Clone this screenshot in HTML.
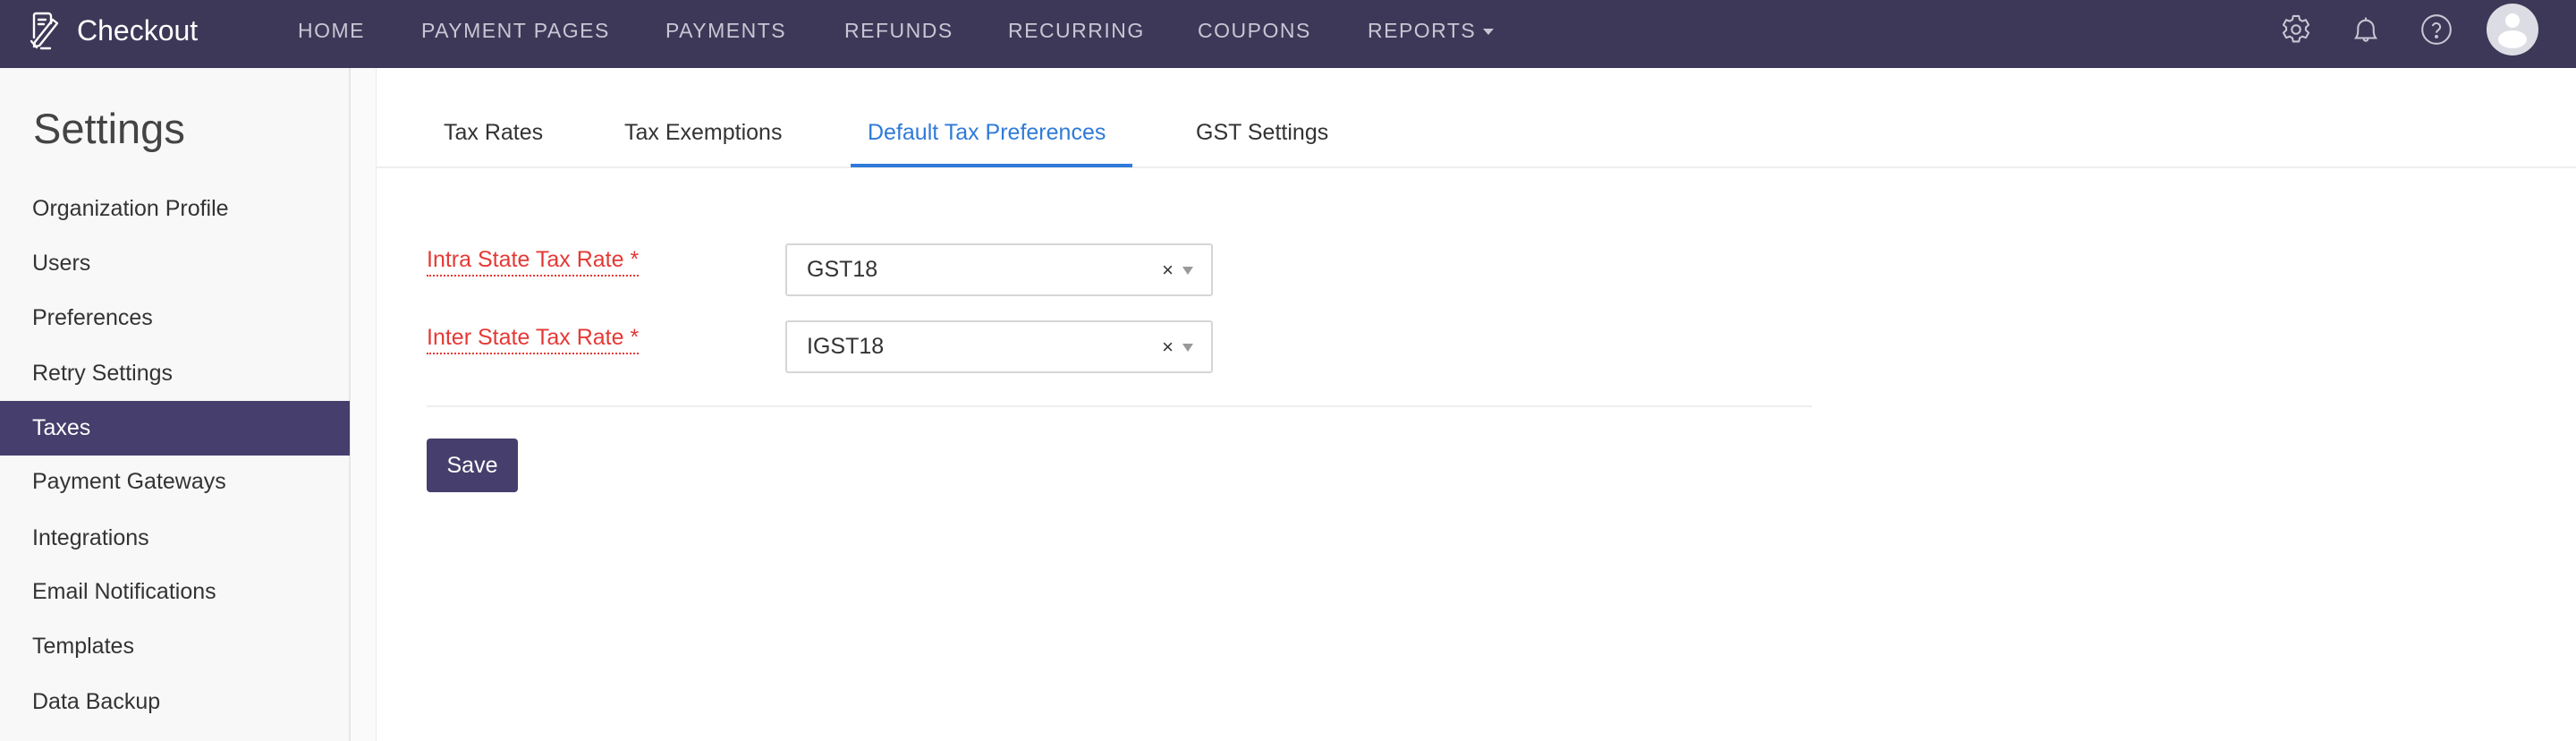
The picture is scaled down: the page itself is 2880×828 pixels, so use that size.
<!DOCTYPE html>
<html><head><meta charset="utf-8"><style>
*{margin:0;padding:0;box-sizing:border-box}
body{width:2880px;height:828px;overflow:hidden;font-family:"Liberation Sans",sans-serif;background:#fff;position:relative}
.nav{position:absolute;left:0;top:0;width:2880px;height:76px;background:#3d3857}
.nav .t{position:absolute;top:0;line-height:68px;color:#c8c6d4;font-size:23px;letter-spacing:1.5px}
.logo{position:absolute;left:86px;top:0;line-height:68px;color:#fff;font-size:32px}
.side{position:absolute;left:0;top:76px;width:392px;height:752px;background:#f8f8f8;border-right:2px solid #e6e6e6}
.gap{position:absolute;left:392px;top:76px;width:29px;height:752px;background:#fafafa;border-right:1px solid #ececec}
.side h1{position:absolute;left:37px;top:40px;font-size:47px;font-weight:normal;color:#444}
.si{position:absolute;left:0;width:391px;height:61px;line-height:61px;padding-left:36px;font-size:25px;color:#333}
.si.a{background:#463e6c;color:#fff}
.tab{position:absolute;top:134px;font-size:25px;color:#333}
.lbl{position:absolute;left:477px;font-size:25px;color:#e53935;border-bottom:2px dotted #e53935;padding-bottom:2px}
.sel{position:absolute;left:878px;width:478px;height:59px;border:2px solid #d6d6d6;border-radius:3px;font-size:25px;color:#333;line-height:55px;padding-left:22px}
.sel .x{position:absolute;right:42px;top:0;font-size:22px}
.sel .c{position:absolute;right:20px;top:24px;border-left:6px solid transparent;border-right:6px solid transparent;border-top:9px solid #999}
</style></head><body>
<div class="nav">
<svg style="position:absolute;left:30px;top:12px" width="42" height="46" viewBox="0 0 42 46" fill="none" stroke="#fff" stroke-width="2.4" stroke-linejoin="round" stroke-linecap="round"><path d="M8 30V5a2 2 0 0 1 2-2h14a3 3 0 0 1 3 3v8"/><path d="M13 10h8M13 15h6"/><path d="M8 40l6-1 20-25-5-4-20 25z"/><path d="M5 34l6 7"/><path d="M16 42h10"/></svg>
<div class="logo">Checkout</div>
<div class="t" style="left:333px">HOME</div>
<div class="t" style="left:471px">PAYMENT PAGES</div>
<div class="t" style="left:744px">PAYMENTS</div>
<div class="t" style="left:944px">REFUNDS</div>
<div class="t" style="left:1127px">RECURRING</div>
<div class="t" style="left:1339px">COUPONS</div>
<div class="t" style="left:1529px">REPORTS <span style="display:inline-block;border-left:6px solid transparent;border-right:6px solid transparent;border-top:7px solid #c8c6d4;vertical-align:middle"></span></div>
<svg style="position:absolute;left:2548px;top:14px" width="38" height="38" viewBox="0 0 24 24" fill="none" stroke="#c8c6d4" stroke-width="1.3" stroke-linejoin="round"><circle cx="12" cy="12" r="3"/><path d="M10 2.5h4l.6 2.6 1.8 1 2.5-.9 2 3.5-2 1.8v2l2 1.8-2 3.5-2.5-.9-1.8 1-.6 2.6h-4l-.6-2.6-1.8-1-2.5.9-2-3.5 2-1.8v-2l-2-1.8 2-3.5 2.5.9 1.800-1z"/></svg>
<svg style="position:absolute;left:2626px;top:14px" width="38" height="38" viewBox="0 0 24 24" fill="none" stroke="#c8c6d4" stroke-width="1.3"><path d="M5 18c1.5-2 1.5-4 1.5-7a5.5 5.5 0 0 1 11 0c0 3 0 5 1.5 7z"/><path d="M12 3.5V5"/><path d="M10.5 18.5a1.5 1.5 0 0 0 3 0"/></svg>
<svg style="position:absolute;left:2705px;top:14px" width="38" height="38" viewBox="0 0 24 24" fill="none" stroke="#c8c6d4" stroke-width="1.3"><circle cx="12" cy="12" r="10"/><path d="M9.3 9.5a2.7 2.7 0 0 1 5.3.8c0 1.8-2.6 2.3-2.6 4"/><circle cx="12" cy="17" r=".6" fill="#c8c6d4"/></svg>
<div style="position:absolute;left:2780px;top:4px;width:58px;height:58px;border-radius:50%;background:#dcdde4;overflow:hidden"><div style="position:absolute;left:21px;top:11px;width:16px;height:16px;border-radius:50%;background:#fff"></div><div style="position:absolute;left:13px;top:30px;width:32px;height:20px;border-radius:50%;background:#fff"></div></div>
</div>
<div class="side"><h1>Settings</h1></div>
<div class="gap"></div>
<div class="si" style="top:203px">Organization Profile</div>
<div class="si" style="top:264px">Users</div>
<div class="si" style="top:325px">Preferences</div>
<div class="si" style="top:387px">Retry Settings</div>
<div class="si a" style="top:448px">Taxes</div>
<div class="si" style="top:508px">Payment Gateways</div>
<div class="si" style="top:571px">Integrations</div>
<div class="si" style="top:631px">Email Notifications</div>
<div class="si" style="top:692px">Templates</div>
<div class="si" style="top:754px">Data Backup</div>
<div style="position:absolute;left:421px;top:186px;width:2459px;height:2px;background:#eee"></div>
<div class="tab" style="left:496px">Tax Rates</div>
<div class="tab" style="left:698px">Tax Exemptions</div>
<div class="tab" style="left:970px;color:#2f7ad9">Default Tax Preferences</div>
<div class="tab" style="left:1337px">GST Settings</div>
<div style="position:absolute;left:951px;top:183px;width:315px;height:4px;background:#2f7ad9"></div>
<div class="lbl" style="top:276px">Intra State Tax Rate *</div>
<div class="lbl" style="top:363px">Inter State Tax Rate *</div>
<div class="sel" style="top:272px">GST18<span class="x">×</span><span class="c"></span></div>
<div class="sel" style="top:358px">IGST18<span class="x">×</span><span class="c"></span></div>
<div style="position:absolute;left:477px;top:453px;width:1549px;height:2px;background:#eee"></div>
<div style="position:absolute;left:477px;top:490px;width:102px;height:60px;background:#463e6c;border-radius:4px;color:#fff;font-size:25px;line-height:60px;text-align:center">Save</div>
</body></html>
